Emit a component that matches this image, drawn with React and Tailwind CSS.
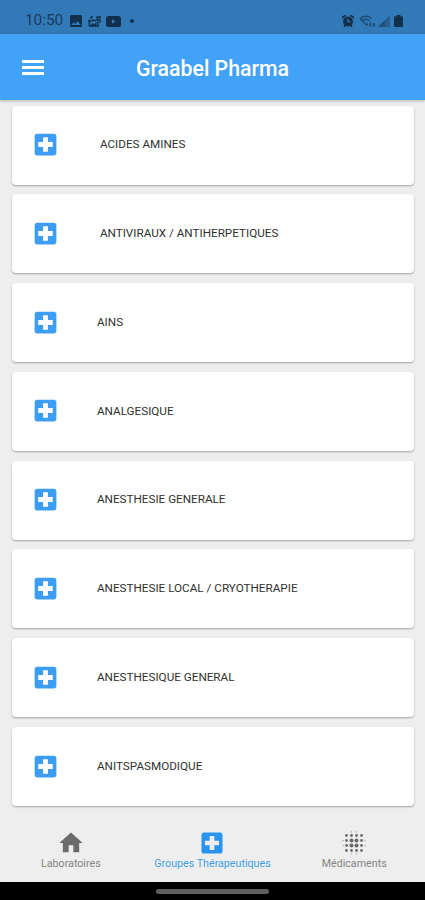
import { MdHome, MdImage, MdLocalHospital } from "react-icons/md";

const groups = [
  " ACIDES AMINES",
  " ANTIVIRAUX / ANTIHERPETIQUES",
  "AINS",
  "ANALGESIQUE",
  "ANESTHESIE GENERALE",
  "ANESTHESIE LOCAL / CRYOTHERAPIE",
  "ANESTHESIQUE GENERAL",
  "ANITSPASMODIQUE",
];

// 4x4 grid of dots, heavier in the middle, with fainter pairs on each side
const BlurIcon = ({ className }) => (
  <svg className={className} viewBox="0 0 28 28" fill="currentColor">
    {[6.5, 11.5, 16.5, 21.5].map((y) =>
      [6.5, 11.5, 16.5, 21.5].map((x) => (
        <circle key={`${x}-${y}`} cx={x} cy={y} r={x > 7 && x < 21 && y > 7 && y < 21 ? 2 : 1.4} />
      ))
    )}
    <g opacity="0.55">
      {[11.5, 16.5].map((n) => (
        <g key={n}>
          <circle cx={n} cy="3" r="0.7" />
          <circle cx={n} cy="25" r="0.7" />
          <circle cx="3" cy={n} r="0.7" />
          <circle cx="25" cy={n} r="0.7" />
        </g>
      ))}
    </g>
  </svg>
);

const tabs = [
  { label: "Laboratoires", icon: MdHome },
  { label: "Groupes Thérapeutiques", icon: MdLocalHospital, active: true },
  { label: "Médicaments", icon: BlurIcon },
];

const StatusBar = () => (
  <div className="flex h-[34px] items-center justify-between bg-[#327ab7] pt-[8px] pr-[22px] pl-[25px] text-[#173b5c]">
    <div className="flex items-center">
      <span className="w-[38px] text-[15.3px] leading-none whitespace-nowrap">10:50</span>
      <MdImage className="ml-[5px] size-[16px] text-[#12304b]" />
      <svg className="ml-[4px] h-[13px] w-[14px]" viewBox="0 0 14 13" fill="none" stroke="#12304b">
        <path d="M3 4V2h2M8 2.500l4-1v6" strokeWidth="1.3" />
        <path d="M1 5.500l2 .8 2-1.300 2 .8 3-1.800v7H1.500z" strokeWidth="1.4" />
        <path d="M2 11l2.500-3 1.500 1.500L8.500 7v4z" fill="#12304b" stroke="none" />
      </svg>
      <svg className="ml-[4px] h-[11px] w-[15px]" viewBox="0 0 15 11">
        <rect width="15" height="11" rx="2.500" fill="#12304b" />
        <path d="M6 3.300l3.500 2.200L6 7.700z" fill="#327ab7" />
      </svg>
      <span className="ml-[9px] size-[4px] rounded-full bg-[#12304b]" />
    </div>
    <div className="flex items-center">
      <svg className="h-[12px] w-[12px]" viewBox="0 0 12 12">
        <path d="M0 3L3.500.3M12 3L8.500.3M2 11.800l1.500-2M10 11.800l-1.500-2" stroke="#12304b" strokeWidth="1.800" />
        <circle cx="6" cy="6.500" r="4.900" fill="#12304b" />
        <path d="M6 4v2.700h2.200" fill="none" stroke="#327ab7" strokeWidth="1.300" />
      </svg>
      <svg className="ml-[5px] h-[13px] w-[17px]" viewBox="0 0 17 13" fill="none" stroke="#1c4a73" strokeWidth="1.5">
        <path d="M1 3.500Q7 -1.200 13 3.500M3.500 5.500Q7 2.800 10.500 5.500M1 3.500L7.500 10 9 8.500" />
        <path d="M11.500 7.500v4M15 11.500V8" strokeWidth="1.8" />
      </svg>
      <svg className="ml-[2px] h-[12px] w-[12px]" viewBox="0 0 12 12">
        <path d="M0 12L12 0v12z" fill="#285f90" />
        <path d="M0 12l7-7v7z" fill="#214f79" />
      </svg>
      <svg className="ml-[4px] h-[12px] w-[9px]" viewBox="0 0 9 12" fill="#12304b">
        <rect x="2.500" width="4" height="3" />
        <rect y="1.300" width="9" height="10.700" rx="1" />
      </svg>
    </div>
  </div>
);

const Header = () => (
  <header className="z-10 grid h-[66px] grid-cols-[1fr_auto_1fr] items-center bg-[#42a2f8] px-[22px] pt-[2px] text-white shadow-[0_1px_3px_rgba(0,0,0,0.25)]">
    <button className="flex w-[22px] flex-col gap-[3px] pb-px" aria-label="Menu">
      <span className="h-[3px] w-full bg-white" />
      <span className="h-[3px] w-full bg-white" />
      <span className="h-[3px] w-full bg-white" />
    </button>
    <h1 className="pt-px text-[21.3px] leading-none font-medium whitespace-nowrap">Graabel Pharma</h1>
  </header>
);

const GroupCard = ({ name }) => (
  <li className="flex h-[79px] items-center rounded-[4px] bg-white pb-px pl-[19px] shadow-[0_1px_2px_rgba(0,0,0,0.32)]">
    <MdLocalHospital className="size-[29px] shrink-0 text-[#3d9df2]" />
    <span className="ml-[37px] pt-px text-[11.7px] leading-none whitespace-pre text-[#303030]">{name}</span>
  </li>
);

const BottomTabs = () => (
  <nav className="grid h-[72px] grid-cols-3 bg-[#eeeeee]">
    {tabs.map(({ label, icon: Icon, active }) => (
      <button key={label} className={`flex flex-col items-center pt-[19px] ${active ? "text-[#2795ef]" : "text-[#6b6b6b]"}`}>
        <Icon className="size-[28px]" />
        <span className={`mt-[2px] text-[10.7px] leading-none whitespace-nowrap ${active ? "text-[#409fe6]" : "text-[#858585]"}`}>{label}</span>
      </button>
    ))}
  </nav>
);

const App = () => (
  <div className="flex h-[900px] w-[425px] flex-col overflow-hidden bg-[#eeeeee] font-[Roboto,sans-serif]">
    <StatusBar />
    <Header />
    <main className="min-h-0 flex-1 overflow-hidden pt-[5.5px] pr-[11px] pl-[12px]">
      <ul className="flex flex-col gap-[9.8px]">
        {groups.map((name) => (
          <GroupCard key={name} name={name} />
        ))}
      </ul>
    </main>
    <BottomTabs />
    <div className="flex h-[18px] justify-center bg-black pt-[7px]">
      <div className="h-[5px] w-[113px] rounded-full bg-[#5e5e5e]" />
    </div>
  </div>
);

export default App;
